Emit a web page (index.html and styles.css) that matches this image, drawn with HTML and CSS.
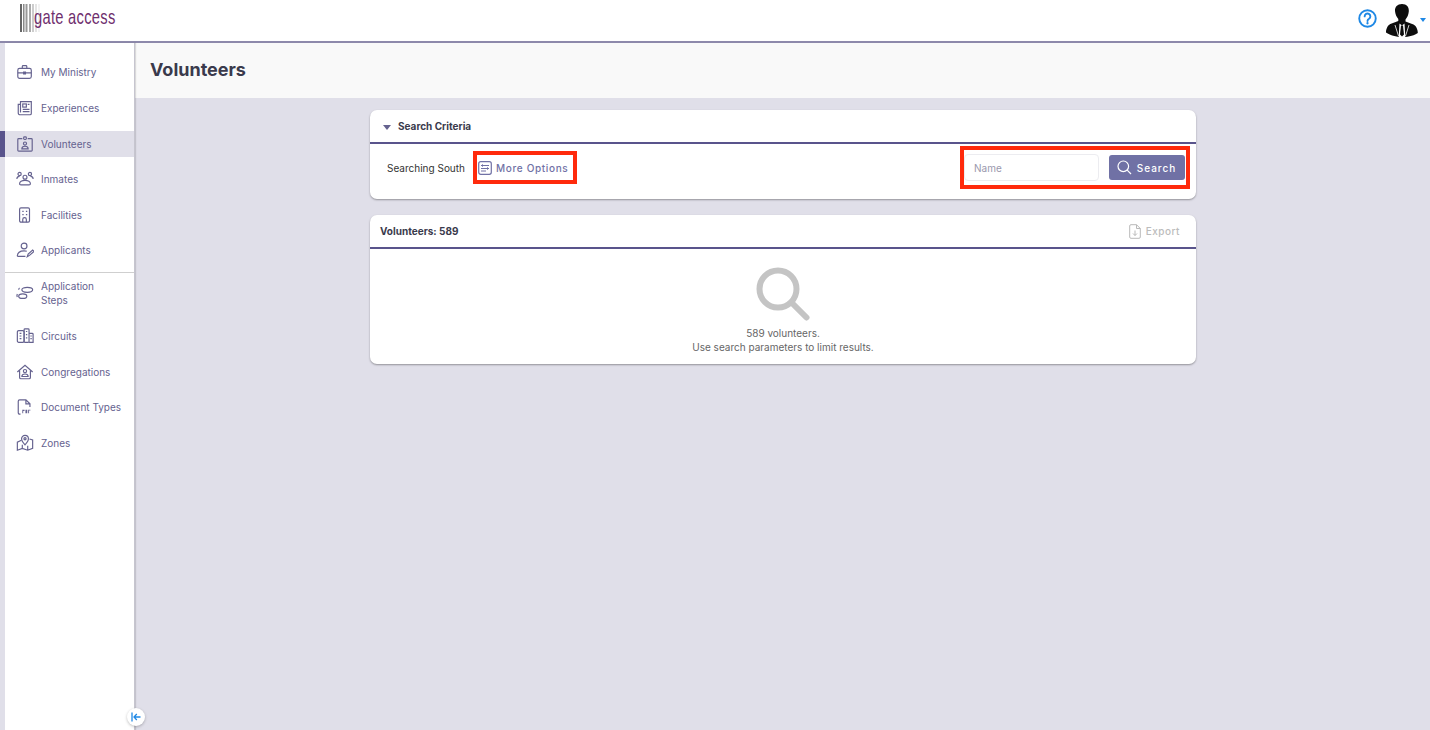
FILE: index.html
```html
<!DOCTYPE html>
<html lang="en">
<head>
<meta charset="utf-8">
<title>Volunteers</title>
<link rel="stylesheet" href="styles.css">
</head>
<body>
<header class="topbar">
  <div class="logo">
    <svg class="logo-bars" width="22" height="28" viewBox="0 0 22 28"><rect x="0" width="2" height="28" fill="#666"/><rect x="3" width="1.5" height="28" fill="#888"/><rect x="5.5" width="2" height="28" fill="#999"/><rect x="9" width="2" height="28" fill="#aaa"/><rect x="12" width="2" height="28" fill="#ccc"/><rect x="15" width="2" height="28" fill="#e4e4e4"/><rect x="18" width="2" height="28" fill="#f2f2f2"/></svg>
    <span class="logo-text">gate access</span>
  </div>
  <div class="top-actions">
    <svg class="help" width="19" height="19" viewBox="0 0 20 20"><circle cx="10" cy="10" r="8.700" fill="none" stroke="#1e88e5" stroke-width="2"/><path d="M7 7.800a3 3 0 1 1 4.600 2.500c-1 .6-1.600 1.100-1.600 2.300" fill="none" stroke="#1e88e5" stroke-width="2" stroke-linecap="round"/><circle cx="10" cy="15" r="1.200" fill="#1e88e5"/></svg>
    <svg class="avatar" width="32" height="33" viewBox="0 0 32 33"><path d="M16 0c4.700 0 7.200 3 6.800 7.500-.3 3-1.500 6-3.300 8v2l8 3c3 1.500 4.300 5.500 4.300 8.500-3 2-8 4-15.800 4S3 30.500 0 28.500c0-3 1.300-7 4.300-8.500l8-3v-2c-1.800-2-3-5-3.300-8C8.800 3 11.300 0 16 0z" fill="#0d0d0d"/><path d="M13.500 19.500l2.500 2 2.500-2 .8 13.500h-6.600z" fill="#fff"/><path d="M15 21.500h2l1 9-2 2-2-2z" fill="#0d0d0d"/><path d="M9 21l3.500 11M23 21l-3.500 11" stroke="#fff" stroke-width=".8"/></svg>
    <span class="caret"></span>
  </div>
</header>
<div class="shell">
  <aside class="sidebar">
    <nav class="nav">
      <a class="nav-item"><svg class="nav-icon" viewBox="0 0 20 20"><rect x="2" y="6" width="15" height="11" rx="2"/><path d="M7 6V4a1 1 0 0 1 1-1h3a1 1 0 0 1 1 1v2M2 11h15M8.500 10h2v2h-2z"/></svg><span>My Ministry</span></a>
      <a class="nav-item"><svg class="nav-icon" viewBox="0 0 20 20"><path d="M5 3h12v13a1.500 1.500 0 0 1-1.500 1.500h-11A2 2 0 0 1 2.500 15.500V6H5zM5 6v9"/><rect x="7.500" y="5.500" width="4" height="3.500"/><path d="M13 6h2M7.500 11.500H15M7.500 14H15"/></svg><span>Experiences</span></a>
      <a class="nav-item is-active"><svg class="nav-icon" viewBox="0 0 20 20"><path d="M7 4H3a1 1 0 0 0-1 1v12a1 1 0 0 0 1 1h14a1 1 0 0 0 1-1V5a1 1 0 0 0-1-1h-4"/><rect x="8.500" y="2" width="3" height="3" rx="1"/><circle cx="10" cy="9.500" r="1.700"/><path d="M6.500 15.500c0-2 1.500-3 3.500-3s3.500 1 3.500 3z"/></svg><span>Volunteers</span></a>
      <a class="nav-item"><svg class="nav-icon" viewBox="0 0 20 20"><circle cx="10" cy="8" r="2.200"/><circle cx="4" cy="4.500" r="1.800"/><circle cx="15.500" cy="4.500" r="1.800"/><path d="M5.500 16.500c-1 0-1.500-.5-1.500-1.300 0-2 2.500-3.700 6-3.700s6 1.700 6 3.700c0 .8-.5 1.300-1.500 1.300zM1 10c0-2 1.200-3 3-3M19 10c0-2-1.200-3-3-3"/></svg><span>Inmates</span></a>
      <a class="nav-item"><svg class="nav-icon" viewBox="0 0 20 20"><rect x="4" y="2" width="11" height="16" rx="1.500"/><path d="M7 6h1.500M11 6h1.500M7 9.500h1.500M11 9.500h1.500M7.500 18v-3a2 2 0 0 1 4 0v3"/></svg><span>Facilities</span></a>
      <a class="nav-item"><svg class="nav-icon" viewBox="0 0 20 20"><circle cx="9" cy="5.500" r="3.200"/><path d="M1.500 17c0-4 3-6 7.500-6 1.200 0 2.200.1 3 .4M1.500 17h9M12.500 17.500l1-3 5-4.500 1.500 1.500-5 4.500z"/></svg><span>Applicants</span></a>
      <a class="nav-item is-split"><svg class="nav-icon" viewBox="0 0 20 20"><ellipse cx="12.500" cy="6.500" rx="6" ry="2.800"/><ellipse cx="7.500" cy="13.500" rx="4.500" ry="2.500"/><path d="M4 4.500C3 5 3 6 3 6.500M1.500 11c-.5 1-.5 2.500 0 3.500"/></svg><span>Application Steps</span></a>
      <a class="nav-item"><svg class="nav-icon" viewBox="0 0 20 20"><rect x="1.500" y="4" width="7.500" height="13" rx="1.500"/><rect x="9" y="2" width="5.500" height="15" rx="1"/><path d="M14.500 7H18a1 1 0 0 1 1 1v9h-4.500M4 7h2M4 10h2M4 13h2M11 5h1.500M11 8.500h1.500M11 12h1.500M16 10h1.500M16 13h1.500"/></svg><span>Circuits</span></a>
      <a class="nav-item"><svg class="nav-icon" viewBox="0 0 20 20"><path d="M1.500 10L10 2.500 18.500 10M4 8.500V16a1.500 1.500 0 0 0 1.500 1.500h9A1.500 1.500 0 0 0 16 16V8.500"/><circle cx="10" cy="9" r="1.800"/><path d="M6.500 15c0-1.800 1.500-2.800 3.500-2.800s3.500 1 3.500 2.800z"/></svg><span>Congregations</span></a>
      <a class="nav-item"><svg class="nav-icon" viewBox="0 0 20 20"><path d="M5 18H4a1.500 1.500 0 0 1-1.500-1.500V3.500A1.500 1.500 0 0 1 4 2h7l4.500 4.500V10M11 2v4.500h4.500"/><path class="solid" d="M7 13h2.500v1.500H8V17H7zM10.500 13h2v4h-2zM13.500 13H16v1h-1.500v3h-1z"/></svg><span>Document Types</span></a>
      <a class="nav-item"><svg class="nav-icon" viewBox="0 0 20 20"><path d="M6 7L1.500 9v9l5.500-2 6 2 5.500-2V6.500L15 5.500M7 16v-4M13 18v-5"/><path d="M10 1.500A3.800 3.800 0 0 1 13.800 5.300C13.800 8 10 12 10 12S6.200 8 6.200 5.300A3.800 3.800 0 0 1 10 1.500z"/><circle cx="10" cy="5.300" r="1.200"/></svg><span>Zones</span></a>
    </nav>
    <button class="collapse" type="button" aria-label="Collapse"><svg width="10" height="10" viewBox="0 0 10 10"><path d="M1 .5v9M9.500 5H3M5.800 2L3 5l2.800 3" fill="none" stroke="#1e88e5" stroke-width="1.300"/></svg></button>
  </aside>
  <main class="main">
    <div class="title-band"><h1>Volunteers</h1></div>
    <div class="content">
      <section class="card search-card">
        <div class="card-head search-head"><span class="tri"></span><h2>Search Criteria</h2></div>
        <div class="search-body">
          <span class="searching">Searching South</span>
          <div class="mark more-mark">
            <a class="more"><svg width="14" height="14" viewBox="0 0 14 14"><rect x=".7" y=".7" width="12.600" height="12.600" rx="2" fill="none" stroke="#7071a5" stroke-width="1.200"/><path d="M3 4.500h8M3 7.500h8M3 10h5M5 3.500l-1.500 1L5 5.500M9 6.500l1.500 1L9 8.500" fill="none" stroke="#7071a5"/></svg>More Options</a>
          </div>
          <div class="mark search-mark">
            <input class="name-input" type="text" placeholder="Name">
            <button class="search-btn" type="button"><svg width="15" height="15" viewBox="0 0 15 15"><circle cx="6.300" cy="6.300" r="5.300" fill="none" stroke="#fff" stroke-width="1.200"/><path d="M10.200 10.200L14 14" stroke="#fff" stroke-width="1.200"/></svg>Search</button>
          </div>
        </div>
      </section>
      <section class="card results-card">
        <div class="card-head results-head"><h2>Volunteers: 589</h2>
          <span class="export"><svg width="12" height="15" viewBox="0 0 12 15"><path d="M7.500 .7H2A1.300 1.300 0 0 0 .7 2v11A1.300 1.300 0 0 0 2 14.300h8a1.300 1.300 0 0 0 1.300-1.300V4.500zM7.500 .7v3.800h3.800M6 6.500v5M4 9.500l2 2 2-2" fill="none" stroke="#b9b9b9"/></svg>Export</span>
        </div>
        <div class="empty">
          <svg class="empty-icon" width="54" height="54" viewBox="0 0 54 54"><circle cx="22" cy="22" r="18.500" fill="none" stroke="#c4c4c4" stroke-width="6"/><path d="M35.500 35.500L50.500 50.500" stroke="#c4c4c4" stroke-width="6" stroke-linecap="round"/></svg>
          <p>589 volunteers.</p>
          <p>Use search parameters to limit results.</p>
        </div>
      </section>
    </div>
  </main>
</div>
</body>
</html>
```
FILE: styles.css
```css
* { box-sizing: border-box; }
html, body { margin: 0; height: 100%; overflow: hidden; }
body { font-family: Inter, "Open Sans", sans-serif; background: #e0dfe9; color: #333; display: flex; flex-direction: column; }

.topbar { height: 43px; flex: none; background: #fff; border-bottom: 2px solid #8d89ab; display: flex; justify-content: space-between; align-items: flex-start; padding: 4px 4px 0 20px; }
.logo { display: flex; align-items: flex-start; }
.logo-text { font-family: "Liberation Sans", sans-serif; font-size: 21px; line-height: 26px; color: #6f2f6e; letter-spacing: .4px; margin-left: -8px; transform: scaleX(.7); transform-origin: left center; white-space: nowrap; }
.top-actions { display: flex; align-items: center; height: 33px; }
.help { margin-right: 9px; margin-top: -5px; }
.caret { width: 0; height: 0; margin-left: 2px; border: 3.500px solid transparent; border-top: 4px solid #1e88e5; border-bottom: 0; margin-top: -1px; }

.shell { flex: 1; display: flex; min-height: 0; }
.sidebar { position: relative; width: 130px; margin-left: 5px; flex: none; background: #fff; border-right: 1px solid #c6c5cf; box-shadow: 1px 0 1px rgba(0,0,0,.12); }
.nav { display: flex; flex-direction: column; padding-top: 11px; }
.nav-item { display: flex; align-items: center; gap: 7px; height: 35.700px; padding-left: 11px; font-size: 10px; line-height: 14px; color: #65628f; white-space: nowrap; }
.nav-item.is-active { background: #e0dfe9; box-shadow: -5px 0 0 #59548c; height: 26.500px; margin: 5.500px 0 3.700px; }
.nav-item.is-split { height: 46px; margin-top: 4px; border-top: 1px solid #cfcfcf; padding-bottom: 6px; padding-right: 24px; white-space: normal; }
.nav-icon { width: 18px; height: 18px; flex: none; fill: none; stroke: #65628f; stroke-width: 1.300; }
.nav-icon .solid { fill: #65628f; stroke: none; }
.collapse { position: absolute; right: -10.500px; bottom: 4px; width: 18px; height: 18px; padding: 0; border: 0; border-radius: 50%; background: #fff; box-shadow: 0 1px 3px rgba(0,0,0,.25); display: flex; align-items: center; justify-content: center; }

.main { flex: 1; min-width: 0; }
.title-band { height: 55px; background: #f9f9f9; padding: 16px 15px 0; }
h1 { margin: 0; font-size: 18px; line-height: 22px; font-weight: 700; color: #3a3a4c; }
.content { width: 826px; margin: 12px 0 0 235px; display: flex; flex-direction: column; gap: 16px; }
.card { background: #fff; border-radius: 7px; box-shadow: 0 1px 2px rgba(0,0,0,.35); }
.card-head { display: flex; align-items: center; border-bottom: 2px solid #59548c; }
h2 { margin: 0; font-size: 10px; font-weight: 700; color: #3a3a4c; }
.search-head { height: 34px; padding-left: 13px; gap: 7px; }
.tri { width: 0; height: 0; border: 4px solid transparent; border-top: 5px solid #65628f; border-bottom: 0; margin-top: 2px; }
.search-card { padding-bottom: 8px; }
.search-body { height: 47px; display: flex; align-items: center; padding: 0 6px 0 17px; font-size: 10px; }
.searching { color: #333; width: 86px; }
.mark { border: 4px solid #ff2a0c; display: flex; align-items: center; }
.more-mark { width: 104px; height: 33px; padding-left: 1px; }
.more { display: flex; align-items: center; gap: 4px; font-size: 10px; font-weight: 500; letter-spacing: .65px; color: #7071a5; white-space: nowrap; }
.search-mark { margin-left: auto; width: 230px; height: 43px; padding-left: 0; }
.name-input { width: 135px; height: 27px; border: 1px solid #ececf0; border-radius: 4px; padding: 0 9px; font: 10px Inter, sans-serif; background: #fff; }
.name-input::placeholder { color: #9a98ad; opacity: 1; }
.search-btn { margin-left: 10px; width: 76px; height: 25px; background: #7071a5; color: #fff; border: 0; border-radius: 3px; display: flex; align-items: center; justify-content: center; gap: 5px; padding: 0 1px 0 0; font: 500 10px Inter, sans-serif; letter-spacing: 1px; }
.results-head { height: 34px; padding: 0 16px 0 10px; justify-content: space-between; }
.export { display: flex; align-items: center; gap: 5px; font-size: 10px; font-weight: 500; letter-spacing: .5px; color: #bcbcbc; }
.empty { height: 115px; padding-top: 18px; display: flex; flex-direction: column; align-items: center; font-size: 10px; line-height: 14px; color: #666; }
.empty-icon { margin-bottom: 5px; }
.empty p { margin: 0; }
```
